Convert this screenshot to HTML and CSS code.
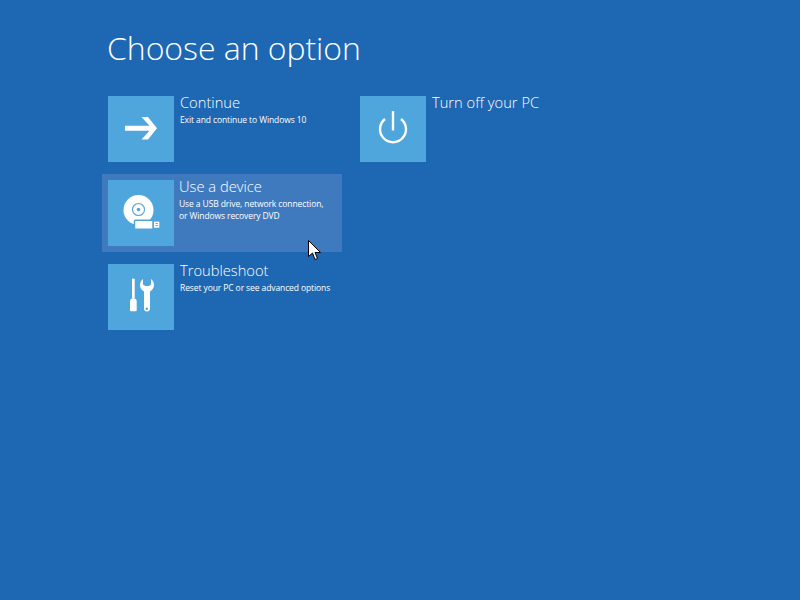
FILE: index.html
```html
<!DOCTYPE html>
<html lang="en">
	<head>
		<meta charset="UTF-8" />
		<title>Choose an option</title>
		<link rel="stylesheet" href="styles.css">
	</head>
	<body>
		<div class="screen">
			<h1 class="page-title">Choose an option</h1>
			<div class="options">
				<div class="column">
					<div class="option">
						<div class="tile">
							<svg width="66" height="66" viewBox="0 0 66 66">
								<path d="M17 29.800h24.500L33.500 21h6.500L49 32.300 40 43.500h-6.500l8-8.700H17z" fill="#fff" />
							</svg>
						</div>
						<div class="option-text">
							<div class="option-name">Continue</div>
							<div class="option-desc">Exit and continue to Windows 10</div>
						</div>
					</div>
					<div class="option option-hover">
						<div class="tile">
							<svg width="66" height="66" viewBox="0 0 66 66">
								<circle cx="30.500" cy="30" r="15" fill="#fff" />
								<circle cx="30.500" cy="29.500" r="6" fill="none" stroke="#4ea6dc" stroke-width="1.100" />
								<circle cx="30.500" cy="29.500" r="1.800" fill="#4ea6dc" />
								<rect x="26.500" y="40.200" width="18.500" height="9" rx="1" fill="#fff" stroke="#4ea6dc" stroke-width="1.500" />
								<rect x="46" y="41.700" width="5.300" height="6" fill="#fff" />
								<rect x="47.500" y="43" width="2.300" height="1" fill="#4ea6dc" />
								<rect x="47.500" y="45" width="2.300" height="1" fill="#4ea6dc" />
							</svg>
						</div>
						<div class="option-text">
							<div class="option-name">Use a device</div>
							<div class="option-desc">Use a USB drive, network connection,<br>or Windows recovery DVD</div>
						</div>
					</div>
					<div class="option">
						<div class="tile">
							<svg width="66" height="66" viewBox="0 0 66 66">
								<rect x="24" y="14.700" width="2.700" height="20" fill="#fff" />
								<path d="M23 34.700h4.700l1 2v9.600a1 1 0 0 1-1 1H23a1 1 0 0 1-1-1v-9.600z" fill="#fff" />
								<path d="M35 15c-2 1.500-3 3.500-3 6 0 3 1.500 5 4 6.500v17c0 1.700 1.300 3 3 3s3-1.300 3-3v-17c2.500-1.500 4-3.500 4-6.500 0-2.500-1-4.500-3-6v5.500l-2 1.500h-4l-2-1.500z" fill="#fff" />
								<circle cx="38.800" cy="44.700" r="1.200" fill="#4ea6dc" />
							</svg>
						</div>
						<div class="option-text">
							<div class="option-name">Troubleshoot</div>
							<div class="option-desc">Reset your PC or see advanced options</div>
						</div>
					</div>
				</div>
				<div class="column">
					<div class="option">
						<div class="tile">
							<svg width="66" height="66" viewBox="0 0 66 66">
								<path d="M25 22.950a13 13 0 1 0 16 0" fill="none" stroke="#fff" stroke-width="2.400" />
								<path d="M33 15v19.500" stroke="#fff" stroke-width="2.400" />
							</svg>
						</div>
						<div class="option-text">
							<div class="option-name">Turn off your PC</div>
						</div>
					</div>
				</div>
			</div>
			<svg class="cursor" width="14" height="21" viewBox="0 0 14 21">
				<path d="M.5.500v16l4-3.500 2.500 6.500 2.500-1-2.500-6h5.500z" fill="#fff" stroke="#000" stroke-width="1" />
			</svg>
		</div>
	</body>
</html>
```

FILE: styles.css
```css
body {
	margin: 0;
	background: #1e67b2;
	color: #fff;
	font-family: "Open Sans", "Liberation Sans", sans-serif;
}
.screen {
	position: relative;
	width: 800px;
	height: 600px;
	padding: 26px 0 0 102px;
	box-sizing: border-box;
	overflow: hidden;
}
.page-title {
	font-size: 32px;
	font-weight: 300;
	line-height: 44px;
	letter-spacing: -0.05px;
	margin: 0 0 20px 5px;
}
.options {
	display: flex;
	gap: 12px;
}
.column {
	display: flex;
	flex-direction: column;
	gap: 6px;
}
.option {
	display: flex;
	gap: 6px;
	width: 240px;
	height: 78px;
	padding: 6px;
	box-sizing: border-box;
}
.option-hover {
	background: #3f7abf;
}
.tile {
	width: 66px;
	height: 66px;
	background: #4ea6dc;
	flex-shrink: 0;
}
.tile svg {
	display: block;
}
.option-text {
	margin-top: -4px;
}
.option-hover .option-text {
	margin-left: -1px;
}
.option-name {
	font-size: 14.7px;
	font-weight: 300;
	line-height: 20px;
	white-space: nowrap;
}
.option-desc {
	font-size: 8.5px;
	letter-spacing: -0.1px;
	line-height: 12px;
	margin-top: 2px;
	white-space: nowrap;
}
.cursor {
	position: absolute;
	left: 308px;
	top: 240px;
}
```
